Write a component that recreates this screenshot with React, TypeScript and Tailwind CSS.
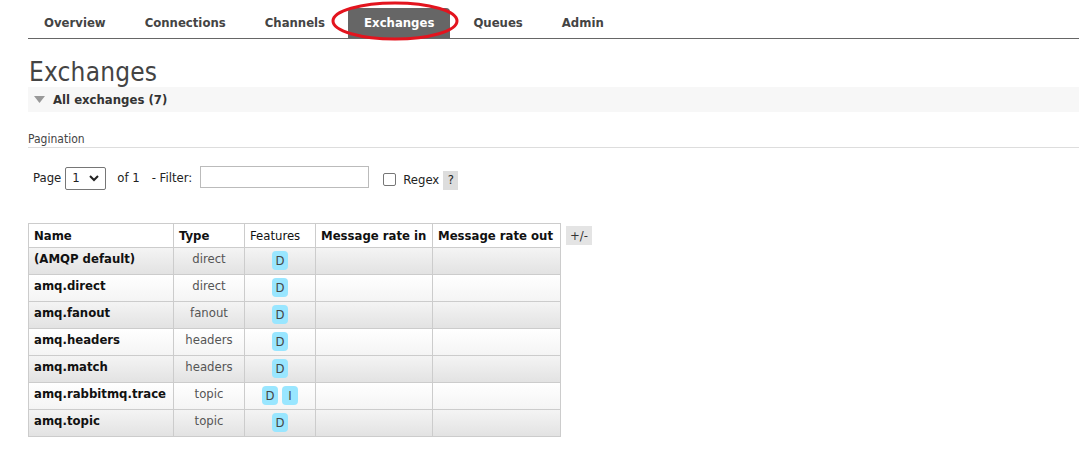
import React from 'react'

const tabs = ['Overview', 'Connections', 'Channels', 'Exchanges', 'Queues', 'Admin']

const rows = [
  { name: '(AMQP default)', type: 'direct', features: ['D'] },
  { name: 'amq.direct', type: 'direct', features: ['D'] },
  { name: 'amq.fanout', type: 'fanout', features: ['D'] },
  { name: 'amq.headers', type: 'headers', features: ['D'] },
  { name: 'amq.match', type: 'headers', features: ['D'] },
  { name: 'amq.rabbitmq.trace', type: 'topic', features: ['D', 'I'] },
  { name: 'amq.topic', type: 'topic', features: ['D'] },
]

const font = "font-['DejaVu_Sans_Condensed','Liberation_Sans',sans-serif]"

export default function App() {
  return (
    <div className={`relative w-[1079px] h-[453px] bg-white text-[13px] text-[#333] ${font}`}>
      {/* top nav */}
      <div className="pl-[28px] pt-[8px]">
        <ul className="flex gap-[7px] border-b border-[#666] h-[31px]">
          {tabs.map((t) => (
            <li
              key={t}
              className={
                t === 'Exchanges'
                  ? 'h-[30px] px-4 pt-[5px] font-bold text-white bg-[#666] rounded-t-[4px]'
                  : 'h-[30px] px-4 pt-[5px] font-bold text-[#444]'
              }
            >
              {t}
            </li>
          ))}
        </ul>
      </div>

      {/* highlight ring */}
      <svg className="absolute left-0 top-0 pointer-events-none" width="1079" height="60">
        <ellipse cx="395" cy="21" rx="62" ry="18" fill="none" stroke="#e3141e" strokeWidth="3" />
      </svg>

      <div className="pl-[28px]">
        <h1 className="mt-[19px] h-[29px] leading-[29px] text-[26px] text-[#444] pl-[1px] tracking-[0.2px]">Exchanges</h1>

        <div className="h-[25px] bg-[#f7f7f7] flex items-center pl-[6px] gap-[8px]">
          <svg width="11" height="7" viewBox="0 0 11 7">
            <path d="M0 0 L11 0 L5.5 7 Z" fill="#999" />
          </svg>
          <span className="font-bold text-[#333]">All exchanges (7)</span>
        </div>

        <div className="mt-[20px] h-[16px] pt-[1px] text-[12px] text-[#444] border-b border-[#ddd] leading-[12px]">
          Pagination
        </div>

        <div className="mt-[18px] flex items-center h-[24px] pl-[5px] text-[#222]">
          <span>Page</span>
          <div className="ml-[4px] w-[41px] h-[23px] border border-[#767676] rounded-[2px] flex items-center justify-between px-[6px]">
            <span>1</span>
            <svg width="10" height="7" viewBox="0 0 10 7">
              <path d="M1 1 L5 5 L9 1" fill="none" stroke="#222" strokeWidth="2" />
            </svg>
          </div>
          <span className="ml-[11px]">of 1</span>
          <span className="ml-[12px]">- Filter:</span>
          <div className="ml-[8px] w-[169px] h-[22px] border border-[#bbb] -mt-[2px]" />
          <div className="ml-[14px] w-[13px] h-[13px] border border-[#767676] rounded-[2px] mt-[2px]" />
          <span className="ml-[7px] mt-[4px]">Regex</span>
          <span className="ml-[4px] mt-[4px] w-[15px] h-[19px] bg-[#ddd] flex items-center justify-center">?</span>
        </div>

        <div className="mt-[33px] flex items-start">
          <table className="border-collapse border border-[#ccc] text-[#111]">
            <thead>
              <tr className="h-[24px] bg-white">
                <th className="w-[145px] border border-[#ccc] text-left font-bold px-[5px] align-middle">Name</th>
                <th className="w-[71px] border border-[#ccc] text-left font-bold px-[5px]">Type</th>
                <th className="w-[71px] border border-[#ccc] text-left font-normal px-[5px]">Features</th>
                <th className="w-[117px] border border-[#ccc] text-left font-bold px-[5px]">Message rate in</th>
                <th className="w-[128px] border border-[#ccc] text-left font-bold px-[5px]">Message rate out</th>
              </tr>
            </thead>
            <tbody>
              {rows.map((r, i) => (
                <tr
                  key={r.name}
                  className={
                    i % 2 === 0
                      ? 'h-[27px] bg-gradient-to-b from-[#f4f4f4] to-[#e2e2e2]'
                      : 'h-[27px] bg-gradient-to-b from-white to-[#f4f4f4]'
                  }
                >
                  <td className="border border-[#ccc] font-bold px-[5px] align-top pt-[1px]">{r.name}</td>
                  <td className="border border-[#ccc] text-center text-[#555] align-top pt-[1px]">{r.type}</td>
                  <td className="border border-[#ccc] align-top pt-[3px]">
                    <div className="flex justify-center gap-[4px]">
                      {r.features.map((f) => (
                        <span
                          key={f}
                          className="w-[16px] h-[19px] rounded-[4px] bg-[#99e6ff] text-[#444] flex items-center justify-center"
                        >
                          {f}
                        </span>
                      ))}
                    </div>
                  </td>
                  <td className="border border-[#ccc]" />
                  <td className="border border-[#ccc]" />
                </tr>
              ))}
            </tbody>
          </table>
          <span className="ml-[5px] mt-[3px] h-[19px] px-[4px] bg-[#e4e4e4] text-[#333] leading-[19px]">+/-</span>
        </div>
      </div>
    </div>
  )
}
